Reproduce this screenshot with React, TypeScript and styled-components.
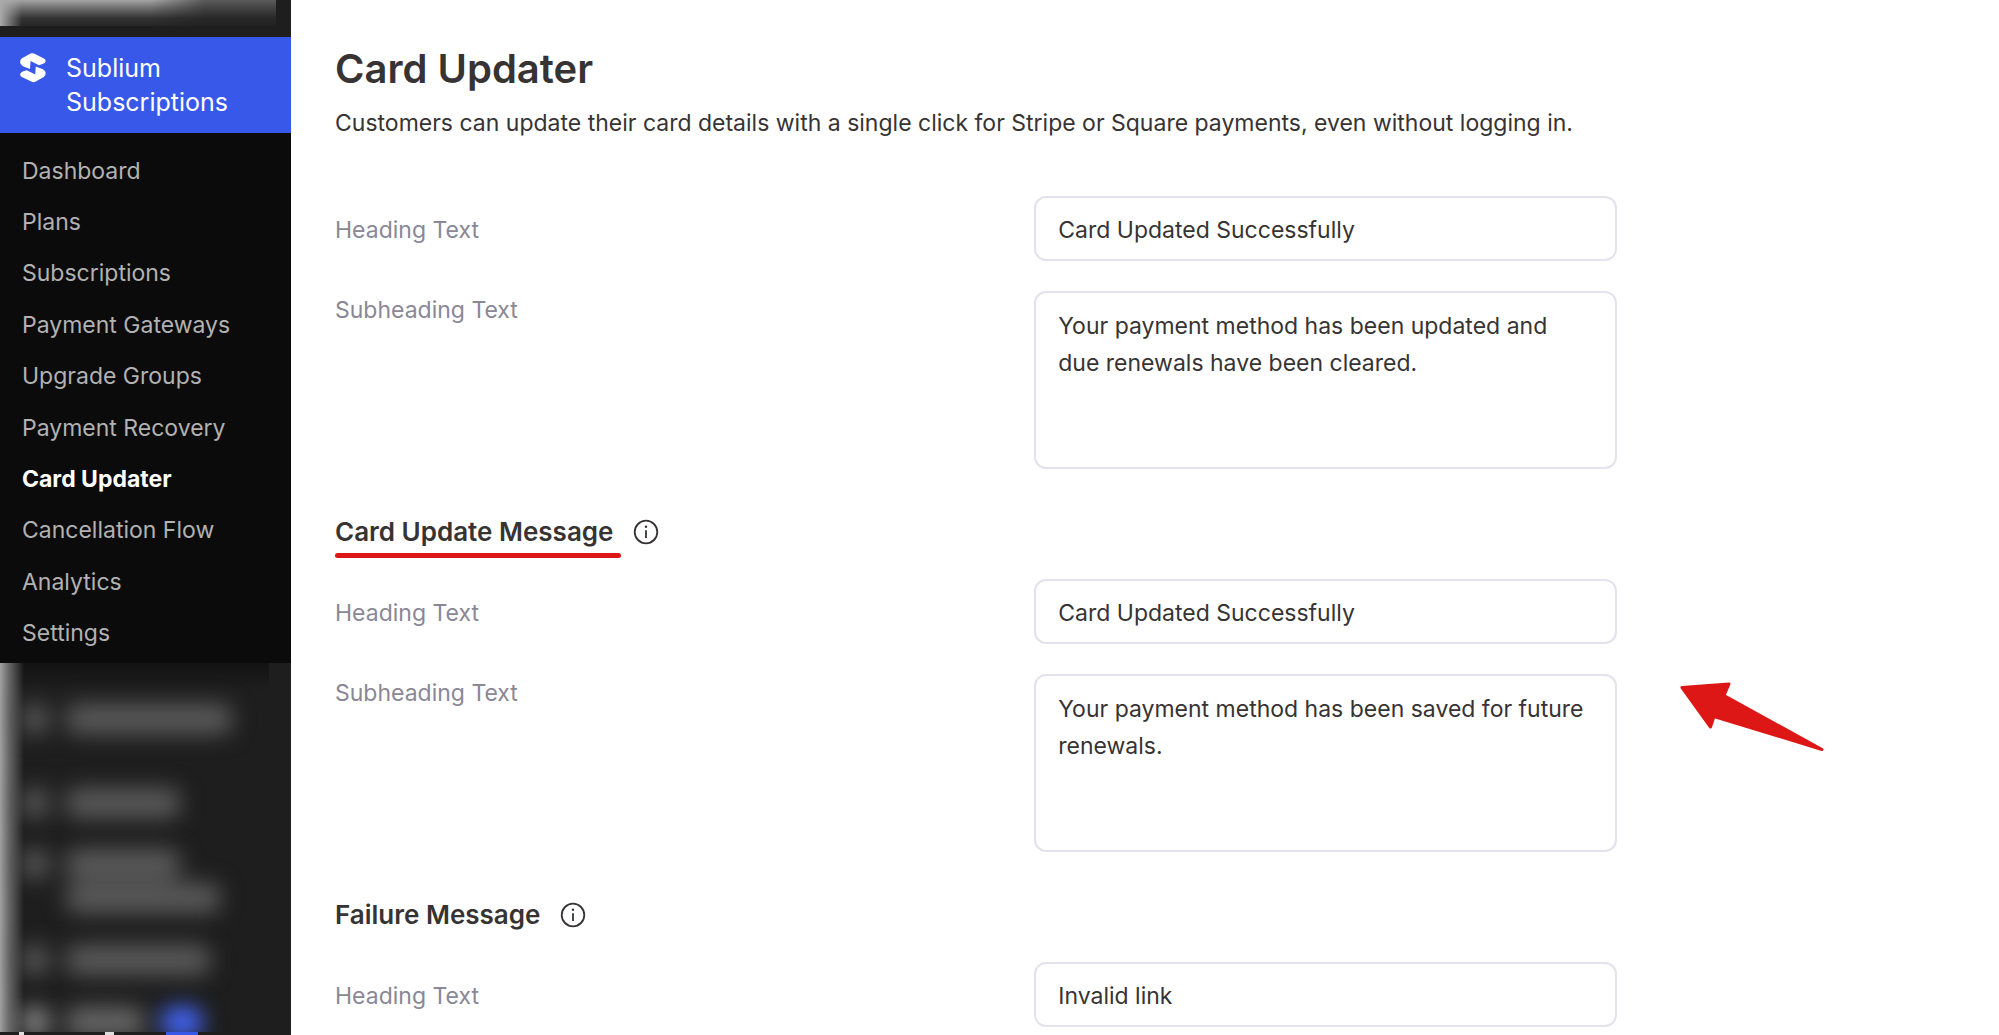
import React, { useId } from "react";
import styled, { createGlobalStyle, css } from "styled-components";

const GlobalStyle = createGlobalStyle`
  *, *::before, *::after { box-sizing: border-box; }
  body {
    margin: 0;
    background: #fff;
    color: #373333;
    font-family: Inter, "Liberation Sans", sans-serif;
    font-size: 23px;
    line-height: 34px;
  }
`;

const Page = styled.div`
  display: flex;
  min-height: 100vh;
  overflow: hidden;
`;

const Sidebar = styled.aside`
  display: flex;
  flex-direction: column;
  flex: none;
  width: 291px;
  height: 100vh;
  overflow: hidden;
  background: #1e1e1e;
`;

const TopBlur = styled.div`
  flex: none;
  width: 276px;
  height: 26px;
  margin-bottom: 11px;
  background:
    linear-gradient(90deg, #aaa 0, transparent 22px),
    linear-gradient(90deg, transparent 150px, rgba(30, 30, 30, 0.55) 205px),
    linear-gradient(180deg, #a5a5a5 0, #707070 30%, #333 70%, #262626 100%);
`;

const Product = styled.a`
  display: flex;
  gap: 20px;
  flex: none;
  padding: 14px 20px;
  background: #3858e9;
  color: #fff;
  font-size: 25px;
  text-decoration: none;
  svg { flex: none; margin-top: 2px; }
`;

const Menu = styled.ul`
  display: grid;
  grid-auto-rows: 1fr;
  flex: none;
  height: 530px;
  margin: 0;
  padding: 12px 0 4px;
  list-style: none;
  background: #0b0b0b;
`;

const MenuLink = styled.a<{ $active?: boolean }>`
  display: flex;
  align-items: center;
  height: 100%;
  padding: 0 22px;
  color: ${(p) => (p.$active ? "#fff" : "#b2b2b2")};
  font-weight: ${(p) => (p.$active ? 700 : 400)};
  text-decoration: none;
`;

const Hidden = styled.div`
  display: flex;
  flex-direction: column;
  flex: 1;
  position: relative;
  width: 269px;
  padding-top: 41px;
  overflow: hidden;
  background: linear-gradient(180deg, #131313 0, #1e1e1e 28px);
  &::before {
    content: "";
    position: absolute;
    inset: 0 auto 0 0;
    width: 24px;
    background: linear-gradient(90deg, #a0a0a0 0, #6a6a6a 35%, rgba(30, 30, 30, 0) 100%);
  }
`;

const HiddenRow = styled.div<{ $space: number }>`
  display: flex;
  flex: none;
  gap: 18px;
  margin-bottom: ${(p) => p.$space}px;
  padding-left: 22px;
  filter: blur(11px);
`;

const Blob = styled.span<{ $w: number; $color?: string }>`
  display: block;
  flex: none;
  width: ${(p) => p.$w}px;
  height: 30px;
  border-radius: 10px;
  background: ${(p) => p.$color ?? "#5a5a5a"};
`;

const BlobStack = styled.div`
  display: grid;
  gap: 4px;
`;

const CutEdge = styled.div`
  flex: none;
  height: 3px;
  background: linear-gradient(
    90deg,
    transparent 19px, #ddd 19px 24px,
    transparent 24px 105px, #ddd 105px 114px,
    transparent 114px 166px, #3858e9 166px 198px,
    transparent 198px
  );
`;

const Main = styled.main`
  flex: 1;
  min-width: 0;
  padding: 43px 44px 6px;
`;

const Title = styled.h1`
  margin: 0;
  font-size: 40px;
  line-height: 52px;
  font-weight: 600;
`;

const Lead = styled.p`
  margin: 11px 0 0;
`;

const Section = styled.section`
  display: grid;
  gap: 30px;
  max-width: 1282px;
  margin-top: 56px;
  & + & { margin-top: 47px; }
`;

const SectionHead = styled.header`
  display: flex;
  align-items: center;
  gap: 20px;
  height: 33px;
  padding-bottom: 1px;
`;

const SectionTitle = styled.h2<{ $marked?: boolean }>`
  position: relative;
  margin: 0;
  font-size: 26px;
  line-height: 32px;
  font-weight: 600;
  ${(p) =>
    p.$marked &&
    css`
      &::after {
        content: "";
        position: absolute;
        left: 0;
        right: -8px;
        bottom: -10px;
        height: 5px;
        border-radius: 3px;
        background: #dd1616;
      }
    `}
`;

const InfoButton = styled.button`
  display: flex;
  padding: 0;
  border: 0;
  background: none;
  color: #373333;
`;

const Row = styled.div`
  display: grid;
  grid-template-columns: 6fr 5fr;
  align-items: start;
  position: relative;
`;

const Label = styled.label<{ $tall?: boolean }>`
  padding-top: ${(p) => (p.$tall ? 2 : 17)}px;
  color: #8a8796;
`;

const field = css`
  display: block;
  width: 100%;
  margin: 0;
  border: 2px solid #e3e2ed;
  border-radius: 12px;
  outline: none;
  background: #fff;
  color: #373333;
  font: inherit;
`;

const TextInput = styled.input`
  ${field}
  height: 65px;
  padding: 2px 22px 0;
`;

const TextArea = styled.textarea`
  ${field}
  height: 178px;
  padding: 15px 22px;
  line-height: 37px;
  resize: none;
`;

const Pointer = styled.svg`
  position: absolute;
  top: 4px;
  left: calc(100% + 59px);
`;

const LOGO_HALF =
  "M10.500.6Q12.300-.3 14 .6L24 5.400Q25.900 6.400 25.600 8.400 25.300 10.200 22.500 11.100L19 12.200 10.600 8 10 16 2.900 13.200Q.2 11.800.1 9.300.1 6.500 2 5.300Z";

const Logo = () => (
  <svg width="26" height="30" viewBox="0 0 26 30" fill="#fff" aria-hidden="true">
    <path d={LOGO_HALF} />
    <path d={LOGO_HALF} transform="rotate(180 12.900 14.700)" />
  </svg>
);

const InfoIcon = () => (
  <svg width="26" height="26" viewBox="0 0 26 26" fill="none" stroke="currentColor" aria-hidden="true">
    <circle cx="13" cy="13" r="11.300" strokeWidth="1.800" />
    <path d="M13 11.300v7.700" strokeWidth="1.800" />
    <circle cx="13" cy="7.800" r="1.200" fill="currentColor" stroke="none" />
  </svg>
);

const menu = [
  "Dashboard",
  "Plans",
  "Subscriptions",
  "Payment Gateways",
  "Upgrade Groups",
  "Payment Recovery",
  "Card Updater",
  "Cancellation Flow",
  "Analytics",
  "Settings",
];

function InputRow({ label, value }: { label: string; value: string }) {
  const id = useId();
  return (
    <Row>
      <Label htmlFor={id}>{label}</Label>
      <TextInput id={id} type="text" defaultValue={value} />
    </Row>
  );
}

function AreaRow({ label, value, children }: { label: string; value: string; children?: React.ReactNode }) {
  const id = useId();
  return (
    <Row>
      <Label htmlFor={id} $tall>{label}</Label>
      <TextArea id={id} defaultValue={value} />
      {children}
    </Row>
  );
}

export default function App() {
  return (
    <Page>
      <GlobalStyle />
      <Sidebar>
        <TopBlur />
        <Product href="#">
          <Logo />
          <span>Sublium Subscriptions</span>
        </Product>
        <Menu>
          {menu.map((item) => (
            <li key={item}>
              <MenuLink href="#" $active={item === "Card Updater"}>{item}</MenuLink>
            </li>
          ))}
        </Menu>
        <Hidden aria-hidden="true">
          <HiddenRow $space={54}><Blob $w={26} /><Blob $w={166} /></HiddenRow>
          <HiddenRow $space={31}><Blob $w={26} /><Blob $w={114} /></HiddenRow>
          <HiddenRow $space={32}>
            <Blob $w={26} />
            <BlobStack><Blob $w={114} /><Blob $w={154} /></BlobStack>
          </HiddenRow>
          <HiddenRow $space={32}><Blob $w={26} /><Blob $w={144} /></HiddenRow>
          <HiddenRow $space={0}><Blob $w={26} $color="#909090" /><Blob $w={78} $color="#666" /><Blob $w={40} $color="#4468ff" /></HiddenRow>
        </Hidden>
        <CutEdge />
      </Sidebar>
      <Main>
        <Title>Card Updater</Title>
        <Lead>Customers can update their card details with a single click for Stripe or Square payments, even without logging in.</Lead>
        <Section>
          <InputRow label="Heading Text" value="Card Updated Successfully" />
          <AreaRow label="Subheading Text" value="Your payment method has been updated and due renewals have been cleared." />
        </Section>
        <Section>
          <SectionHead>
            <SectionTitle $marked>Card Update Message</SectionTitle>
            <InfoButton type="button" aria-label="About the card update message"><InfoIcon /></InfoButton>
          </SectionHead>
          <InputRow label="Heading Text" value="Card Updated Successfully" />
          <AreaRow label="Subheading Text" value="Your payment method has been saved for future renewals.">
            <Pointer width="150" height="76" viewBox="0 0 150 76" fill="#dd1616" stroke="#dd1616" strokeWidth="3" strokeLinejoin="round" aria-hidden="true">
              <path d="M6 9.500 53 6 48 17.500 146 71.500 38 38.500 34.500 49Z" />
            </Pointer>
          </AreaRow>
        </Section>
        <Section>
          <SectionHead>
            <SectionTitle>Failure Message</SectionTitle>
            <InfoButton type="button" aria-label="About the failure message"><InfoIcon /></InfoButton>
          </SectionHead>
          <InputRow label="Heading Text" value="Invalid link" />
        </Section>
      </Main>
    </Page>
  );
}
